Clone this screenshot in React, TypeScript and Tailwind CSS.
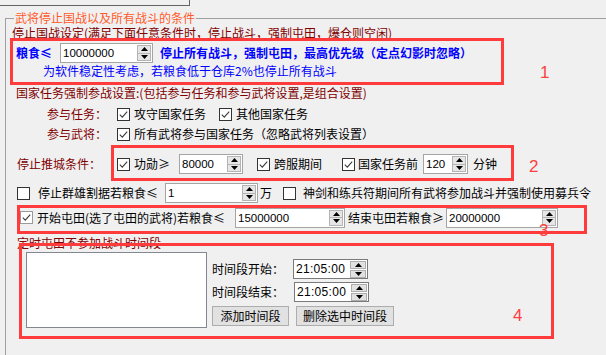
import React from "react";

function Check({ checked = true, light = false }: { checked?: boolean; light?: boolean }) {
  return (
    <span
      className={`inline-flex h-[13px] w-[13px] shrink-0 items-center justify-center border bg-white ${
        light ? "border-[#9a9a9a]" : "border-[#333333]"
      }`}
    >
      {checked && (
        <svg width="11" height="11" viewBox="0 0 11 11">
          <path d="M1.8 5.6 L4.3 8.1 L9.2 2.6" fill="none" stroke="#3a3a3a" strokeWidth="1.1" />
        </svg>
      )}
    </span>
  );
}

function Tri({ up = false }: { up?: boolean }) {
  return (
    <svg width="7" height="4" viewBox="0 0 7 4">
      <path d={up ? "M0 4 L3.5 0 L7 4Z" : "M0 0 L3.5 4 L7 0Z"} fill="#000" />
    </svg>
  );
}

function SpinBtns() {
  return (
    <div className="my-[1px] mr-[1px] flex w-[14px] shrink-0 flex-col border border-[#b4b4b4] bg-[#e6e6e6]">
      <div className="flex flex-1 items-center justify-center border-b border-[#b4b4b4]">
        <Tri up />
      </div>
      <div className="flex flex-1 items-center justify-center">
        <Tri />
      </div>
    </div>
  );
}

function NumInput({ value, w }: { value: string; w: string }) {
  return (
    <div className={`flex h-[20px] shrink-0 border border-[#a5a5a5] bg-white ${w}`}>
      <span className="flex-1 pl-[2px] font-['Liberation_Sans',sans-serif] text-[11.5px] leading-[18px] text-black">
        {value}
      </span>
      <SpinBtns />
    </div>
  );
}

function TimeInput({ value }: { value: string }) {
  return (
    <div className="flex h-[20px] w-[75px] shrink-0 items-center border border-[#7a7a7a] bg-white">
      <span className="flex-1 pl-[2px] font-['Liberation_Sans',sans-serif] text-[12px] leading-[18px] tracking-[0.3px] text-black">
        {value}
      </span>
      <div className="mr-[1px] flex w-[16px] flex-col gap-[1px]">
        <div className="flex h-[8px] items-center justify-center border border-[#adadad] bg-[#e1e1e1]">
          <Tri up />
        </div>
        <div className="flex h-[8px] items-center justify-center border border-[#adadad] bg-[#e1e1e1]">
          <Tri />
        </div>
      </div>
    </div>
  );
}

export default function App() {
  return (
    <div className="relative flex h-[355px] w-[606px] flex-col overflow-hidden bg-[#f0f0f0] font-['Noto_Sans_CJK_SC',sans-serif] text-[12px] leading-[14px] text-black">
      {/* top partial box */}
      <div className="h-[6px] w-[190px] shrink-0 border-b border-r border-[#646464] pl-[9px]">
        <div className="h-[5px] w-[1px]" />
      </div>

      {/* group box */}
      <div className="relative mt-[12px] ml-[5px] flex flex-1 flex-col border-l border-t border-[#a0a0a0]">
        <span className="absolute -top-[8px] left-[8px] bg-[#f0f0f0] px-[1px] text-[#ff5a2a]">
          武将停止国战以及所有战斗的条件
        </span>

        {/* Row A */}
        <div className="mt-[7px] flex h-[14px] items-center whitespace-nowrap pl-[6px] text-[#800000]">
          停止国战设定(满足下面任意条件时，停止战斗，强制屯田，爆仓则空闲)
        </div>

        {/* Row B */}
        <div className="mt-[3px] flex h-[20px] items-center whitespace-nowrap pl-[10px]">
          <span className="w-[44px] shrink-0 font-bold text-[#0000ff]">粮食≤</span>
          <NumInput value="10000000" w="w-[93px]" />
          <span className="ml-[7px] font-bold text-[#0000ff]">
            停止所有战斗，强制屯田，最高优先级（定点幻影时忽略）
          </span>
        </div>

        {/* Row C */}
        <div className="mt-[1px] flex h-[14px] items-center whitespace-nowrap pl-[37px] text-[#0000ff]">
          为软件稳定性考虑，若粮食低于仓库2%也停止所有战斗
        </div>

        {/* Row D */}
        <div className="mt-[8px] flex h-[14px] items-center whitespace-nowrap pl-[10px] text-[#800000]">
          国家任务强制参战设置:(包括参与任务和参与武将设置,是组合设置)
        </div>

        {/* Row E */}
        <div className="mt-[7px] flex h-[14px] items-center whitespace-nowrap pl-[41px]">
          <span className="w-[70px] shrink-0 text-[#800000]">参与任务：</span>
          <Check />
          <span className="ml-[4px] w-[85px] shrink-0">攻守国家任务</span>
          <Check />
          <span className="ml-[4px]">其他国家任务</span>
        </div>

        {/* Row F */}
        <div className="mt-[6px] flex h-[14px] items-center whitespace-nowrap pl-[41px]">
          <span className="w-[70px] shrink-0 text-[#800000]">参与武将：</span>
          <Check />
          <span className="ml-[4px]">所有武将参与国家任务（忽略武将列表设置）</span>
        </div>

        {/* Row G */}
        <div className="mt-[13px] flex h-[20px] items-center whitespace-nowrap pl-[11px]">
          <span className="w-[100px] shrink-0 text-[#800000]">停止推城条件：</span>
          <Check />
          <span className="ml-[4px] w-[45px] shrink-0">功勋≥</span>
          <NumInput value="80000" w="w-[64px]" />
          <span className="ml-[14px]" />
          <Check />
          <span className="ml-[4px] w-[68px] shrink-0">跨服期间</span>
          <Check />
          <span className="ml-[3px] w-[65px] shrink-0">国家任务前</span>
          <NumInput value="120" w="w-[45px]" />
          <span className="ml-[5px]">分钟</span>
        </div>

        {/* Row H */}
        <div className="mt-[9px] flex h-[20px] items-center whitespace-nowrap pl-[11px]">
          <Check checked={false} />
          <span className="ml-[8px] w-[127px] shrink-0">停止群雄割据若粮食≤</span>
          <NumInput value="1" w="w-[93px]" />
          <span className="ml-[2px] w-[23px] shrink-0">万</span>
          <Check checked={false} />
          <span className="ml-[7px]">神剑和练兵符期间所有武将参加战斗并强制使用募兵令</span>
        </div>

        {/* Row I */}
        <div className="mt-[4px] flex h-[21px] items-center whitespace-nowrap pl-[14px]">
          <Check light />
          <span className="ml-[4px] w-[198px] shrink-0">开始屯田(选了屯田的武将)若粮食≤</span>
          <NumInput value="15000000" w="w-[110px]" />
          <span className="ml-[3px] w-[98px] shrink-0">结束屯田若粮食≥</span>
          <NumInput value="20000000" w="w-[112px]" />
        </div>

        {/* Row J */}
        <div className="mt-[8px] flex h-[14px] items-center whitespace-nowrap pl-[11px] text-[#800000]">
          定时屯田不参加战斗时间段
        </div>

        {/* Row K */}
        <div className="mt-[2px] flex pl-[20px]">
          <div className="h-[76px] w-[181px] shrink-0 border border-[#828790] bg-white" />
          <div className="ml-[5px] flex flex-col">
            <div className="mt-[7px] flex h-[20px] items-center whitespace-nowrap">
              <span className="w-[81px] shrink-0">时间段开始：</span>
              <TimeInput value="21:05:00" />
            </div>
            <div className="mt-[3px] flex h-[20px] items-center whitespace-nowrap">
              <span className="w-[82px] shrink-0">时间段结束：</span>
              <TimeInput value="21:05:00" />
            </div>
            <div className="mt-[4px] flex h-[20px] items-center whitespace-nowrap">
              <button className="flex h-[20px] w-[77px] items-center justify-center border border-[#adadad] bg-[#e1e1e1]">
                添加时间段
              </button>
              <button className="ml-[7px] flex h-[20px] w-[98px] items-center justify-center border border-[#adadad] bg-[#e1e1e1]">
                删除选中时间段
              </button>
            </div>
          </div>
        </div>
      </div>

      {/* red annotation boxes */}
      <div className="pointer-events-none absolute left-[10px] top-[38px] h-[47px] w-[494px] border-[3px] border-[#ff3b3b]" />
      <div className="pointer-events-none absolute left-[111px] top-[145px] h-[36px] w-[403px] border-[3px] border-[#ff3b3b]" />
      <div className="pointer-events-none absolute left-[17px] top-[205px] h-[29px] w-[570px] border-[3px] border-[#ff3b3b]" />
      <div className="pointer-events-none absolute left-[19px] top-[243px] h-[96px] w-[535px] border-[3px] border-[#ff3b3b]" />

      <span className="absolute left-[540px] top-[63px] font-['Liberation_Sans',sans-serif] text-[17px] leading-[20px] text-[#ff4040]">1</span>
      <span className="absolute left-[529px] top-[157px] font-['Liberation_Sans',sans-serif] text-[17px] leading-[20px] text-[#ff4040]">2</span>
      <span className="absolute left-[539px] top-[221px] font-['Liberation_Sans',sans-serif] text-[17px] leading-[20px] text-[#ff4040]">3</span>
      <span className="absolute left-[513px] top-[306px] font-['Liberation_Sans',sans-serif] text-[17px] leading-[20px] text-[#ff4040]">4</span>
    </div>
  );
}
